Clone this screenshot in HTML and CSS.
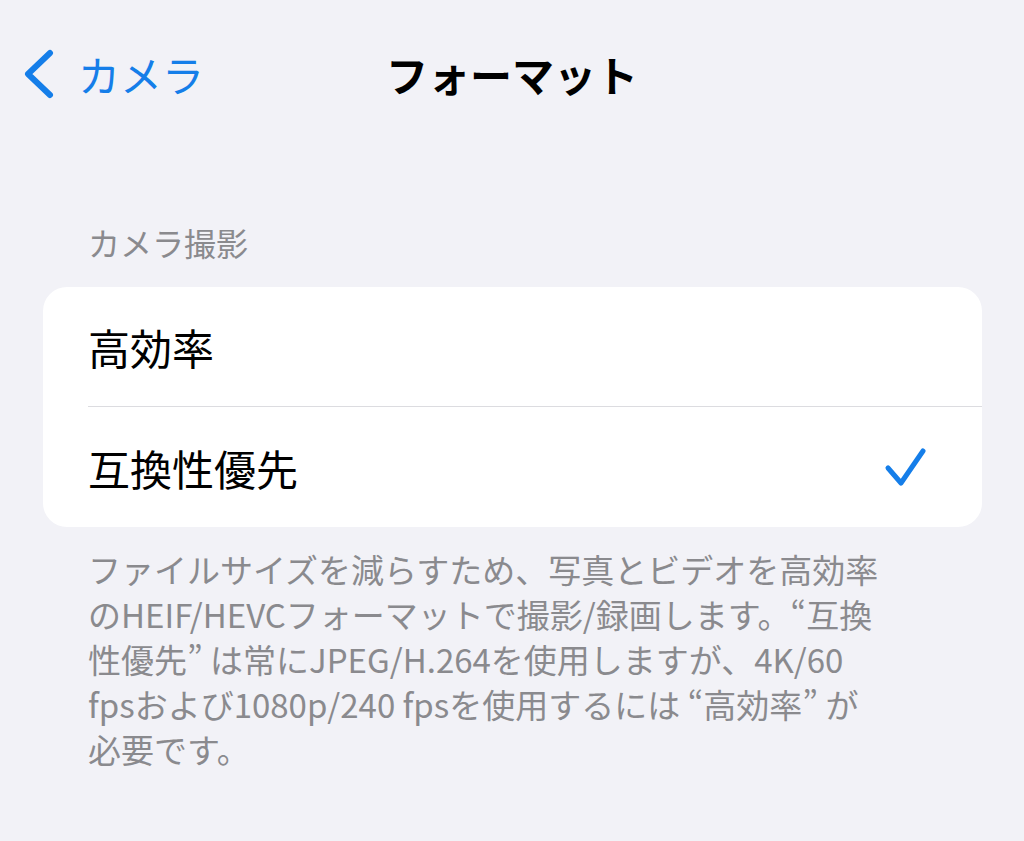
FILE: index.html
```html
<!DOCTYPE html>
<html lang="ja">
<head>
<meta charset="utf-8">
<title>フォーマット</title>
<link rel="stylesheet" href="styles.css">
</head>
<body>
<div class="navbar">
  <div class="nav-back">
    <svg class="chevron" width="34" height="52" viewBox="0 0 34 52">
      <polyline points="26,5 4,26 26,47" fill="none" stroke="#157ee9" stroke-width="6" stroke-linecap="round" stroke-linejoin="round"/>
    </svg>
    <span>カメラ</span>
  </div>
  <div class="nav-title">フォーマット</div>
  <div></div>
</div>

<div class="section-header">カメラ撮影</div>
<div class="card">
  <div class="row">
    <span>高効率</span>
  </div>
  <div class="row">
    <span>互換性優先</span>
    <svg class="check" width="44" height="42" viewBox="0 0 44 42">
      <polyline points="4,22 17,37 39,5" fill="none" stroke="#157ee9" stroke-width="5" stroke-linecap="round" stroke-linejoin="round"/>
    </svg>
  </div>
</div>
<p class="footer">ファイルサイズを減らすため、写真とビデオを高効率<br>のHEIF/HEVCフォーマットで撮影/録画します。“互換<br>性優先” は常にJPEG/H.264を使用しますが、4K/60<br>fpsおよび1080p/240 fpsを使用するには “高効率” が<br>必要です。</p>
</body>
</html>
```

FILE: styles.css
```css
body {
  margin: 0;
  background-color: #f2f2f7;
  font-family: "Noto Sans CJK JP", "Noto Sans", sans-serif;
  color: #000000;
}

.navbar {
  display: grid;
  grid-template-columns: 1fr auto 1fr;
  align-items: center;
  height: 60px;
  padding-top: 44px;
}

.nav-back {
  display: flex;
  align-items: center;
  gap: 20px;
  padding-left: 24px;
  color: #157ee9;
  font-size: 42px;
  line-height: 60px;
}

.nav-title {
  font-size: 42px;
  font-weight: bold;
  line-height: 60px;
}

.section-header {
  margin-top: 116px;
  padding-left: 88px;
  font-size: 32px;
  line-height: 44px;
  color: #8a8a8e;
}

.card {
  margin: 23px 42px 0 43px;
  background-color: #ffffff;
  border-radius: 24px;
}

.row {
  display: flex;
  align-items: center;
  justify-content: space-between;
  height: 119px;
  margin-left: 45px;
  padding-right: 54px;
  font-size: 42px;
}

.row + .row {
  height: 120px;
  border-top: 1px solid #dcdce0;
}

.footer {
  margin: 20px 0 0 0;
  padding-left: 88px;
  font-size: 33px;
  line-height: 45px;
  color: #8a8a8e;
  white-space: nowrap;
}
```
